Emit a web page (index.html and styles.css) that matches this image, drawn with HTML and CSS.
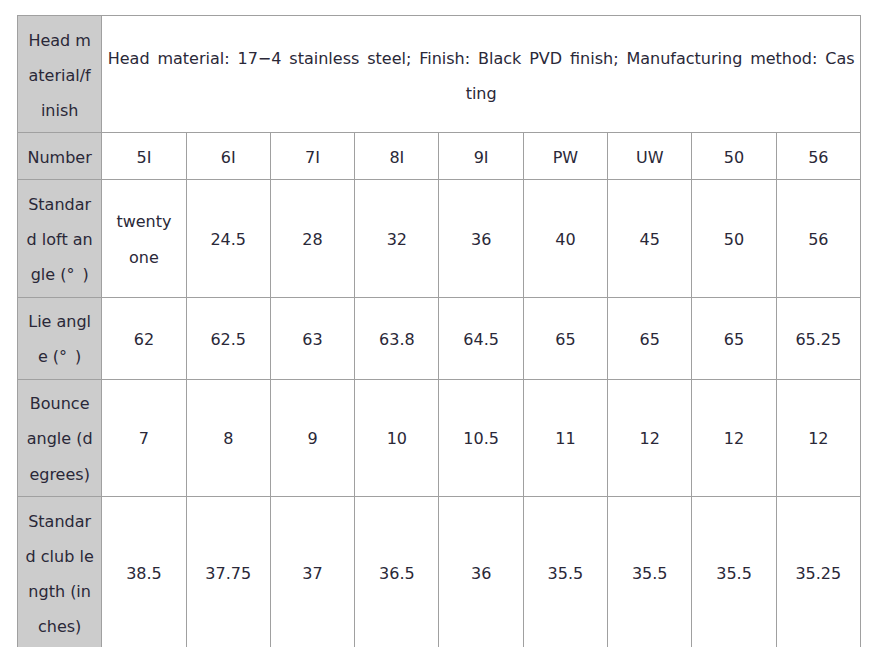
FILE: index.html
```html
<!DOCTYPE html>
<html>
<head>
<meta charset="utf-8">
<link rel="stylesheet" href="styles.css">
</head>
<body>
<table class="spec">
  <colgroup>
    <col><col><col><col><col><col><col><col><col><col>
  </colgroup>
  <tr>
    <th>Head m<br>aterial/f<br>inish</th>
    <td colspan="9" class="desc">Head material: 17−4 stainless steel; Finish: Black PVD finish; Manufacturing method: Cas<br>ting</td>
  </tr>
  <tr>
    <th>Number</th>
    <td>5I</td><td>6I</td><td>7I</td><td>8I</td><td>9I</td><td>PW</td><td>UW</td><td>50</td><td>56</td>
  </tr>
  <tr>
    <th>Standar<br>d loft an<br>gle (°&ensp;)</th>
    <td>twenty<br>one</td><td>24.5</td><td>28</td><td>32</td><td>36</td><td>40</td><td>45</td><td>50</td><td>56</td>
  </tr>
  <tr>
    <th>Lie angl<br>e (°&ensp;)</th>
    <td>62</td><td>62.5</td><td>63</td><td>63.8</td><td>64.5</td><td>65</td><td>65</td><td>65</td><td>65.25</td>
  </tr>
  <tr>
    <th>Bounce<br>angle (d<br>egrees)</th>
    <td>7</td><td>8</td><td>9</td><td>10</td><td>10.5</td><td>11</td><td>12</td><td>12</td><td>12</td>
  </tr>
  <tr>
    <th>Standar<br>d club le<br>ngth (in<br>ches)</th>
    <td>38.5</td><td>37.75</td><td>37</td><td>36.5</td><td>36</td><td>35.5</td><td>35.5</td><td>35.5</td><td>35.25</td>
  </tr>
</table>
</body>
</html>
```
FILE: styles.css
```css
html, body {
  margin: 0;
  padding: 0;
  background: #fff;
}
body {
  padding: 15px 0 0 17px;
  font-family: "DejaVu Sans", "Liberation Sans", sans-serif;
  font-size: 16px;
  color: #2a2838;
}
.spec {
  border-collapse: collapse;
  table-layout: fixed;
  width: 844px;
}
.spec th, .spec td {
  border: 1px solid #a0a0a0;
  padding: 6.5px 4px 4.5px;
  line-height: 35.1px;
  text-align: center;
  vertical-align: middle;
  font-weight: normal;
  white-space: nowrap;
}
.spec th {
  background: #cccccc;
}
.spec td.desc {
  word-spacing: 2.8px;
  padding-top: 7.5px;
  padding-bottom: 3.5px;
}
```
